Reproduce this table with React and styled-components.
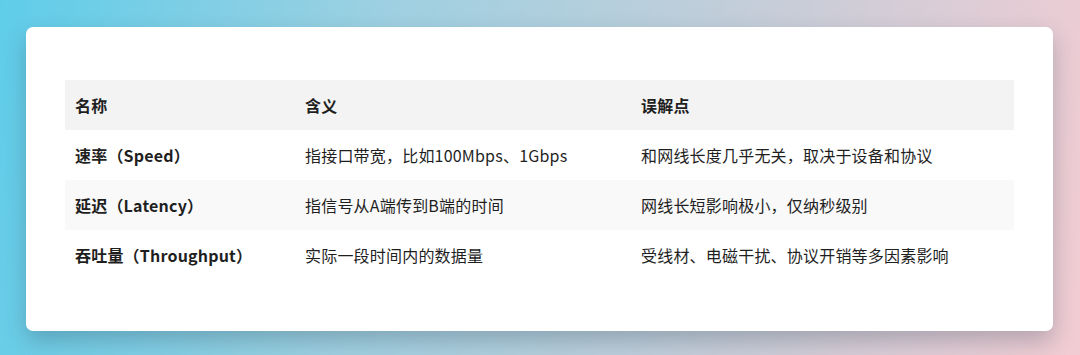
import React from 'react';
import styled, { createGlobalStyle } from 'styled-components';

const GlobalStyle = createGlobalStyle`
  html, body {
    margin: 0;
    padding: 0;
  }
  body {
    font-family: "Noto Sans CJK SC", "Noto Sans", sans-serif;
  }
`;

const Page = styled.div`
  width: 1080px;
  height: 355px;
  box-sizing: border-box;
  padding: 27px 27px 0 26px;
  background: linear-gradient(100deg, #5fcde9 0%, #9fd0e1 35%, #c9cdd8 70%, #f2ccd3 100%);
  overflow: hidden;
`;

const Card = styled.div`
  background: #fff;
  border-radius: 7px;
  padding: 53px 39px 51px 39px;
  box-shadow: 0 10px 22px rgba(40, 60, 80, 0.28);
`;

const Table = styled.table`
  width: 949px;
  border-collapse: collapse;
  table-layout: fixed;
  font-size: 16px;
  color: #1f1f1f;
`;

const Row = styled.tr`
  height: 50px;
  background: ${(p) => (p.$head ? '#f3f3f3' : p.$shade ? '#f9f9f9' : '#fff')};
`;

const Cell = styled.td`
  padding: 0 10px;
  vertical-align: middle;
  font-weight: ${(p) => (p.$bold ? 700 : 400)};
  white-space: nowrap;
  letter-spacing: 0.2px;
`;

const rows = [
  ['速率（Speed）', '指接口带宽，比如100Mbps、1Gbps', '和网线长度几乎无关，取决于设备和协议'],
  ['延迟（Latency）', '指信号从A端传到B端的时间', '网线长短影响极小，仅纳秒级别'],
  ['吞吐量（Throughput）', '实际一段时间内的数据量', '受线材、电磁干扰、协议开销等多因素影响'],
];

export default function App() {
  return (
    <>
      <GlobalStyle />
      <Page>
        <Card>
          <Table>
            <colgroup>
              <col style={{ width: 230 }} />
              <col style={{ width: 336 }} />
              <col style={{ width: 383 }} />
            </colgroup>
            <tbody>
              <Row $head>
                <Cell $bold>名称</Cell>
                <Cell $bold>含义</Cell>
                <Cell $bold>误解点</Cell>
              </Row>
              {rows.map((r, i) => (
                <Row key={i} $shade={i === 1}>
                  <Cell $bold>{r[0]}</Cell>
                  <Cell>{r[1]}</Cell>
                  <Cell>{r[2]}</Cell>
                </Row>
              ))}
            </tbody>
          </Table>
        </Card>
      </Page>
    </>
  );
}
